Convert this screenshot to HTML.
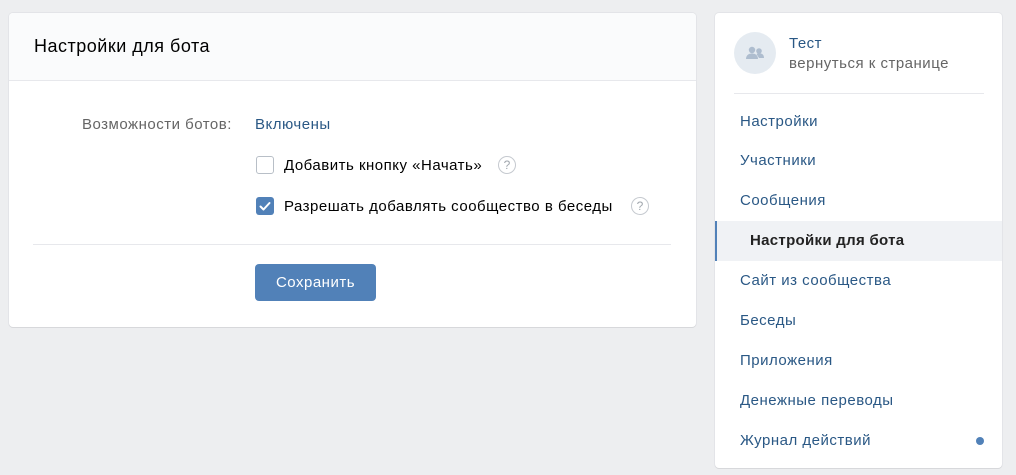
<!DOCTYPE html>
<html><head><meta charset="utf-8"><style>
*{margin:0;padding:0;box-sizing:border-box}
body{width:1016px;height:475px;background:#edeef0;font-family:"Liberation Sans",Arial,sans-serif;font-size:15px;letter-spacing:.5px;position:relative;overflow:hidden}
.card{position:absolute;background:#fff;border-radius:4px;box-shadow:0 1px 0 0 #d7d8db,0 0 0 1px #e3e4e8}
#main{left:9px;top:13px;width:687px;height:314px}
.hdr{height:68px;background:#fafbfc;border-bottom:1px solid #e7e8ec;border-radius:4px 4px 0 0;padding:23px 25px;font-size:18px;color:#000}
.abs{position:absolute;white-space:nowrap}
.cb{position:absolute;width:18px;height:18px;border-radius:3px}
.q{position:absolute;width:18px;height:18px;border:1px solid #c5c9cf;border-radius:50%;color:#a0a6ad;font-size:12px;letter-spacing:0;text-align:center;line-height:16px}
#side{left:715px;top:13px;width:287px;height:455px}
.mi{position:absolute;left:25px;color:#2a5885;white-space:nowrap}
</style></head><body>
<div class="card" id="main">
<div class="hdr">Настройки для бота</div>
<div class="abs" style="left:73px;top:103px;color:#656565">Возможности ботов:</div>
<div class="abs" style="left:246px;top:103px;color:#2a5885">Включены</div>
<div class="cb" style="left:247px;top:143px;border:1px solid #b8bfc7"></div>
<div class="abs" style="left:275px;top:144px;color:#000">Добавить кнопку «Начать»</div>
<div class="q" style="left:489px;top:143px">?</div>
<div class="cb" style="left:247px;top:184px;background:#5181b8"><svg width="18" height="18"><path d="M4.5 9.5l3 3 6-6.5" stroke="#fff" stroke-width="2" fill="none" stroke-linecap="round" stroke-linejoin="round"/></svg></div>
<div class="abs" style="left:275px;top:185px;color:#000">Разрешать добавлять сообщество в беседы</div>
<div class="q" style="left:622px;top:184px">?</div>
<div class="abs" style="left:24px;top:231px;width:638px;height:1px;background:#e7e8ec"></div>
<div class="abs" style="left:246px;top:251px;width:121px;height:37px;background:#5181b8;border-radius:4px;color:#fff;text-align:center;line-height:37px">Сохранить</div>
</div>
<div class="card" id="side">
<div class="abs" style="left:19px;top:19px;width:42px;height:42px;border-radius:50%;background:#e5ebf1">
<svg width="42" height="42"><circle cx="18" cy="18" r="3.2" fill="#aebdcf"/><circle cx="25" cy="19" r="2.8" fill="#aebdcf"/><path d="M12 27c0-4 3-5.5 6-5.5s6 1.5 6 5.5z" fill="#aebdcf"/><path d="M22.5 22c1-.6 1.8-.8 2.8-.8 2.5 0 4.7 1.3 4.7 4.8h-5z" fill="#aebdcf"/></svg></div>
<div class="abs" style="left:74px;top:22px;color:#2a5885">Тест</div>
<div class="abs" style="left:74px;top:42px;color:#656565">вернуться к странице</div>
<div class="abs" style="left:19px;top:80px;width:250px;height:1px;background:#e7e8ec"></div>
<div class="mi" style="top:100px">Настройки</div>
<div class="mi" style="top:139px">Участники</div>
<div class="mi" style="top:179px">Сообщения</div>
<div class="abs" style="left:0;top:208px;width:287px;height:40px;background:#f0f2f5;border-left:2px solid #5181b8"></div>
<div class="mi" style="top:219px;left:35px;color:#222;font-weight:bold;letter-spacing:.3px">Настройки для бота</div>
<div class="mi" style="top:259px">Сайт из сообщества</div>
<div class="mi" style="top:299px">Беседы</div>
<div class="mi" style="top:339px">Приложения</div>
<div class="mi" style="top:379px">Денежные переводы</div>
<div class="mi" style="top:419px">Журнал действий</div>
<div class="abs" style="left:261px;top:424px;width:8px;height:8px;border-radius:50%;background:#5181b8"></div>
</div>
</body></html>
